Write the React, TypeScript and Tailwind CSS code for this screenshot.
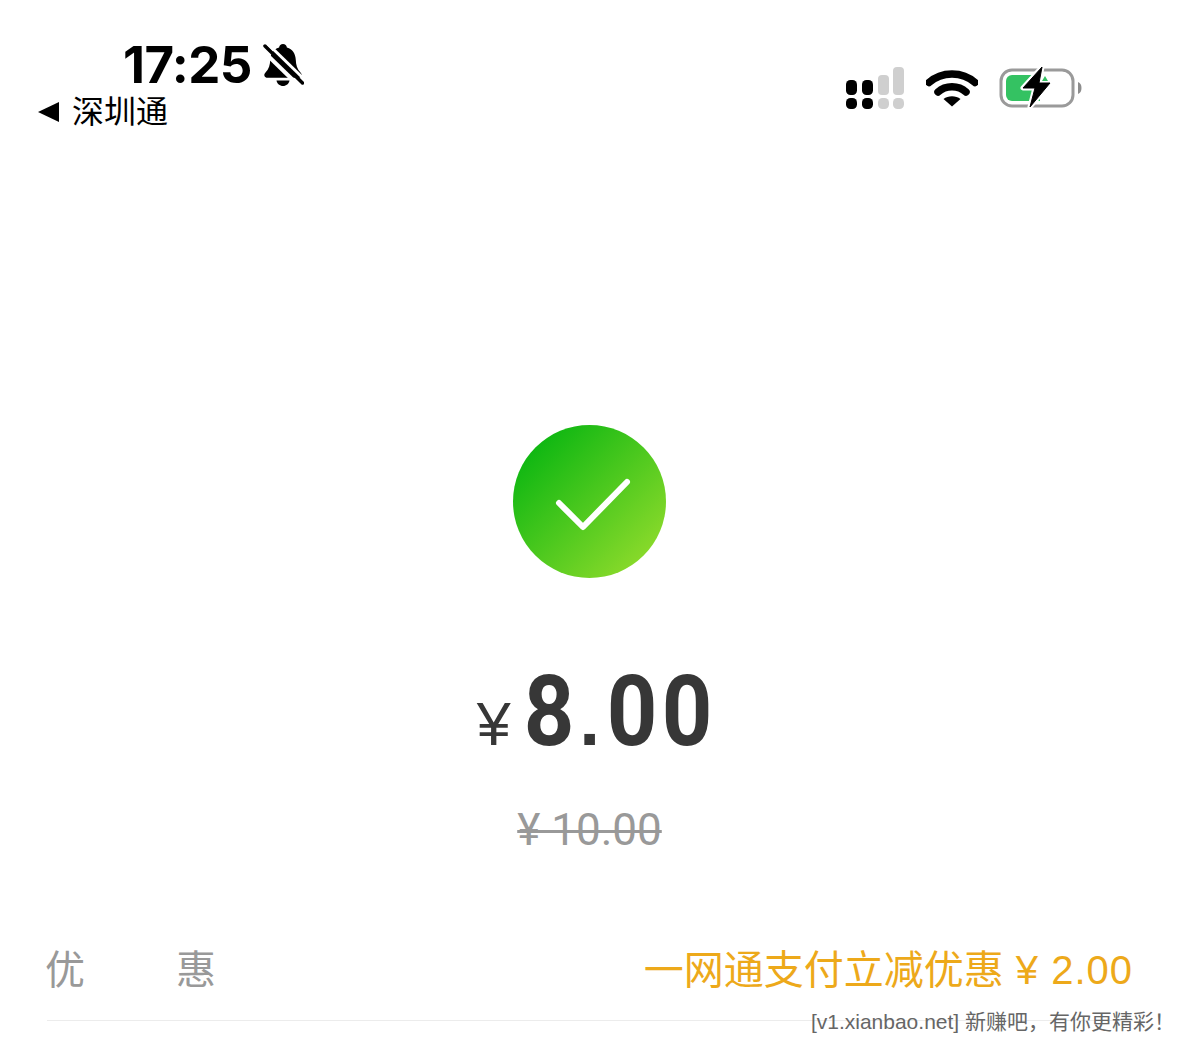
const CJK = "font-['Liberation_Sans','Noto_Sans_CJK_SC',sans-serif]";

function Bell() {
  return (
    <svg width="42" height="44" viewBox="0 0 42 44" className="ml-[10px] mt-[6px]">
      <path d="M21 1c2.200 0 3.600 1.500 3.900 3.400 5.800 1.600 8.600 6.400 8.900 12.600.2 5 1.200 9 4.700 12.400 1.200 1.200 1.400 2.400 1 3.600-.4 1.100-1.500 1.800-3 1.800H5.500c-1.500 0-2.600-.7-3-1.800-.4-1.200-.2-2.400 1-3.600 3.500-3.400 4.500-7.400 4.700-12.400.3-6.200 3.100-11 8.900-12.600C17.400 2.500 18.800 1 21 1z" fill="#000" />
      <path d="M14.500 37.500h13c-.6 3.200-3.200 5.500-6.500 5.500s-5.900-2.300-6.500-5.500z" fill="#000" />
      <path d="M1 8 36 42" stroke="#fff" strokeWidth="4" />
      <path d="M3 3 40.500 40" stroke="#000" strokeWidth="3.500" strokeLinecap="round" />
      <path d="M6 1 42 36" stroke="#fff" strokeWidth="3" />
    </svg>
  );
}

function Signal() {
  return (
    <svg width="60" height="42" viewBox="0 0 60 42" className="-ml-[2px]">
      <rect x="1" y="13" width="11" height="15" rx="4.500" fill="#000" />
      <rect x="17" y="13" width="11" height="15" rx="4.500" fill="#000" />
      <rect x="33" y="8" width="11" height="20" rx="4" fill="#cfcfcf" />
      <rect x="48" y="0" width="11" height="28" rx="4" fill="#cfcfcf" />
      <rect x="1" y="31" width="11" height="11" rx="4.500" fill="#000" />
      <rect x="17" y="31" width="11" height="11" rx="4.500" fill="#000" />
      <rect x="33" y="31" width="11" height="11" rx="4.500" fill="#cfcfcf" />
      <rect x="48" y="31" width="11" height="11" rx="4.500" fill="#cfcfcf" />
    </svg>
  );
}

function Wifi() {
  return (
    <svg width="52" height="38" viewBox="0 0 52 38" className="ml-[1px]">
      <path d="M3 13.500C15.500 2 36.500 2 49 13.500" stroke="#000" strokeWidth="7.500" fill="none" strokeLinecap="round" strokeLinejoin="round" />
      <path d="M12 23C19.500 16 32.500 16 40 23" stroke="#000" strokeWidth="7.500" fill="none" strokeLinecap="round" />
      <path d="M26 37.500 17.500 30C22 26.300 30 26.300 34.500 30z" fill="#000" />
    </svg>
  );
}

function Battery() {
  return (
    <svg width="84" height="42" viewBox="0 0 84 42">
      <rect x="3" y="3" width="72" height="36" rx="11" fill="none" stroke="#9a9a9a" strokeWidth="3" />
      <path d="M14 8h28v26H14a6 6 0 0 1-6-6V14a6 6 0 0 1 6-6z" fill="#34c262" />
      <path d="M80 15c2.500 1 3.500 3.200 3.500 6s-1 5-3.500 6z" fill="#8d8d8d" />
      <path d="M44 0 25 21h12l-5 19 20-24H41z" fill="#fff" stroke="#fff" strokeWidth="5" strokeLinejoin="round" />
      <path d="M44 0 25 21h12l-5 19 20-24H41z" fill="#000" stroke="#000" strokeWidth="1" strokeLinejoin="round" />
      <path d="M47 9l3 5h-6z" fill="#34c262" />
    </svg>
  );
}

function Digit({ children }: { children: string }) {
  return (
    <span className="inline-block w-[54.5px] scale-x-[0.9] text-center font-['Roboto',sans-serif] font-bold text-[98px] leading-[120px]">
      {children}
    </span>
  );
}

export default function App() {
  return (
    <div className={`relative w-[1179px] h-[1044px] overflow-hidden bg-white ${CJK}`}>
      <header className="flex items-start justify-between h-[425px]">
        <div className="pl-[38px] pt-[37px]">
          <div className="flex items-start pl-[85px] h-[54px]">
            <span className="font-['Inter',sans-serif] font-bold text-[51px] leading-[56px] tracking-[-0.6px] text-black">17:25</span>
            <Bell />
          </div>
          <div className="flex items-center h-[42px]">
            <svg width="22" height="22" viewBox="0 0 22 22"><path d="M0 11 21 1v20z" fill="#000" /></svg>
            <span className="ml-[12px] text-[32px] leading-[42px] text-black">深圳通</span>
          </div>
        </div>
        <div className="flex items-center gap-[20px] pt-[67px] pr-[97px]">
          <Signal />
          <Wifi />
          <Battery />
        </div>
      </header>

      <main className="flex flex-col items-center">
        <div className="flex h-[153px] w-[153px] items-center justify-center rounded-full bg-[linear-gradient(135deg,#00b30f_5%,#92dc2c_92%)]">
          <svg width="153" height="153" viewBox="0 0 153 153"><path d="M46 78 70 102 114 57" stroke="#fff" strokeWidth="6" fill="none" strokeLinecap="round" strokeLinejoin="round" /></svg>
        </div>
        <div className="mt-[74px] flex h-[120px] items-baseline pl-[11px] text-[#373737]">
          <span className="text-[61px] font-normal leading-none mr-[10px]">¥</span>
          <Digit>8</Digit>
          <span className="inline-block w-[29px] text-center font-['Liberation_Sans',sans-serif] font-bold text-[75px] leading-[120px]">.</span>
          <Digit>0</Digit>
          <Digit>0</Digit>
        </div>
        <div className="mt-[33px] text-[44px] leading-[50px] text-[#999999] line-through decoration-[3px] font-['Roboto',sans-serif]">¥ 10.00</div>
      </main>

      <div className="ml-[47px] mr-[46px] mt-[92px] flex h-[74px] justify-between border-b border-[#ececec]">
        <div className="-ml-[2px] flex w-[171px] justify-between text-[40px] leading-[46px] text-[#999999]">
          <span>优</span>
          <span>惠</span>
        </div>
        <div className="text-[40px] leading-[46px] text-[#eda91a]">一网通支付立减优惠<span className="tracking-[1px]"> ¥ 2.00</span></div>
      </div>

      <div className="absolute right-[4px] top-[1009px] text-[21px] leading-[26px] text-[#666666]">[v1.xianbao.net] 新赚吧，有你更精彩！</div>
    </div>
  );
}
